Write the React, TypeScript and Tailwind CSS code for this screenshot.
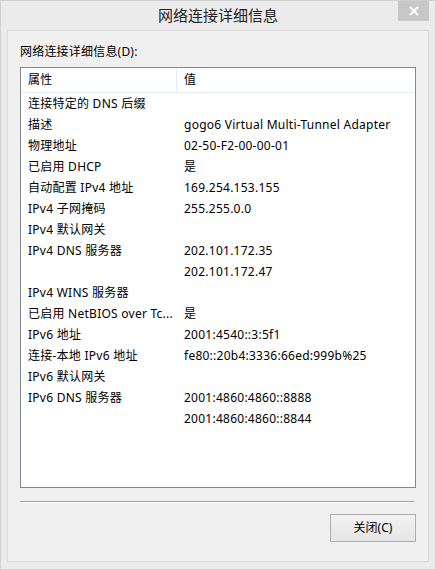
import React from "react";

const rows: [string, string][] = [
  ["连接特定的 DNS 后缀", ""],
  ["描述", "gogo6 Virtual Multi-Tunnel Adapter"],
  ["物理地址", "02-50-F2-00-00-01"],
  ["已启用 DHCP", "是"],
  ["自动配置 IPv4 地址", "169.254.153.155"],
  ["IPv4 子网掩码", "255.255.0.0"],
  ["IPv4 默认网关", ""],
  ["IPv4 DNS 服务器", "202.101.172.35"],
  ["", "202.101.172.47"],
  ["IPv4 WINS 服务器", ""],
  ["已启用 NetBIOS over Tc...", "是"],
  ["IPv6 地址", "2001:4540::3:5f1"],
  ["连接-本地 IPv6 地址", "fe80::20b4:3336:66ed:999b%25"],
  ["IPv6 默认网关", ""],
  ["IPv6 DNS 服务器", "2001:4860:4860::8888"],
  ["", "2001:4860:4860::8844"],
];

export default function App() {
  return (
    <div
      className="w-[436px] h-[570px] bg-[#ebebeb] border border-[#d0d0d0] flex flex-col text-black"
      style={{ fontFamily: '"Noto Sans", "Noto Sans CJK SC", sans-serif' }}
    >
      <div className="relative h-[29px] flex items-center justify-center">
        <span className="text-[15px] text-[#222] leading-none">网络连接详细信息</span>
        <div className="absolute right-[6px] top-0 w-[31px] h-[20px] bg-[#c7c7c7] flex items-center justify-center">
          <svg width="10" height="10" viewBox="0 0 10 10">
            <path d="M1 1 L9 9 M9 1 L1 9" stroke="#fff" strokeWidth="2" />
          </svg>
        </div>
      </div>
      <div className="mx-[6px] mb-[7px] flex-1 bg-[#f0f0f0] border border-[#dadada] flex flex-col px-[12px]">
        <div className="text-[12px] leading-none mt-[15px] h-[21px] tracking-[0.2px]">网络连接详细信息(D):</div>
        <div className="h-[421px] bg-white border border-[#828790] text-[12px] tracking-[0.25px] flex flex-col">
          <div className="h-[25px] flex items-center border-b border-[#e3ecf6] shrink-0">
            <div className="w-[156px] pl-[7px] border-r border-[#e3ecf6] h-full flex items-center">属性</div>
            <div className="pl-[7px]">值</div>
          </div>
          {rows.map(([k, v], i) => (
            <div key={i} className="h-[21px] flex items-center shrink-0">
              <div className="w-[156px] pl-[7px] pr-[2px] whitespace-nowrap overflow-hidden">{k}</div>
              <div className="pl-[7px] whitespace-nowrap">{v}</div>
            </div>
          ))}
        </div>
        <div className="mt-[13px] h-[2px] border-t border-[#a0a0a0] border-b border-b-white mr-[2px]" />
        <div className="flex justify-end mt-[11px]">
          <div className="w-[86px] h-[28px] border border-[#adadad] bg-gradient-to-b from-[#f2f2f2] to-[#e5e5e5] flex items-center justify-center text-[12px]">
            关闭(C)
          </div>
        </div>
      </div>
    </div>
  );
}
